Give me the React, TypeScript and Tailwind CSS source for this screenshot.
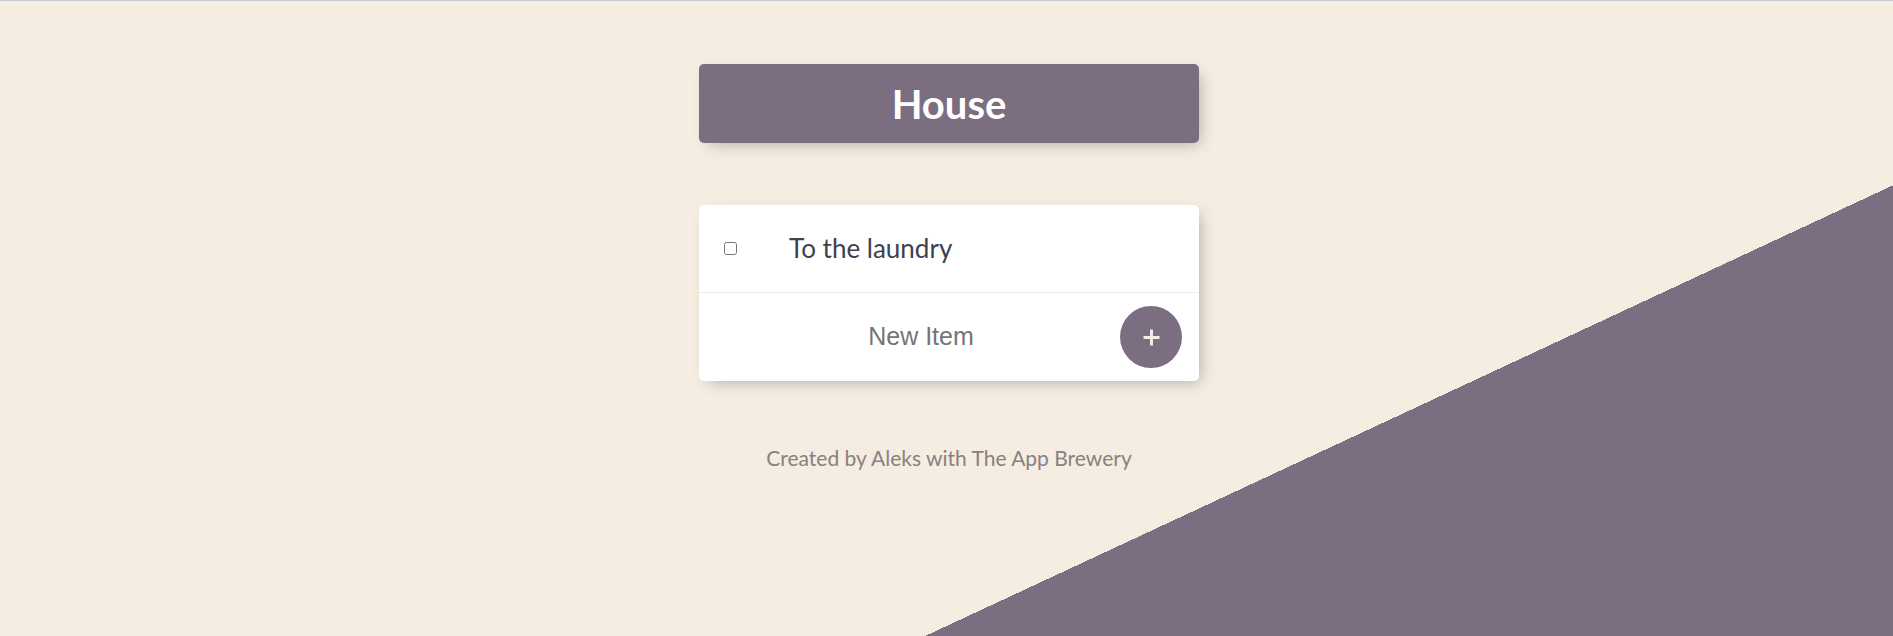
import React, { useState } from 'react';

interface Item {
  id: number;
  title: string;
  done: boolean;
}

export default function App() {
  const [items, setItems] = useState<Item[]>([{ id: 1, title: 'To the laundry', done: false }]);
  const [draft, setDraft] = useState('');

  const addItem = () => {
    if (!draft.trim()) return;
    setItems([...items, { id: Date.now(), title: draft.trim(), done: false }]);
    setDraft('');
  };

  return (
    <div className="min-h-screen w-full bg-[linear-gradient(155.03deg,#f5ece2_70.3%,#7b6e80_70.3%)] font-['Lato','Noto_Sans',sans-serif]">
      <div className="h-px w-full bg-[#c5c8cc]" />
      <div className="flex flex-col items-center pl-[5px]">
        {/* Heading */}
        <div className="mt-[63px] flex h-[79px] w-[500px] items-center justify-center rounded-[5px] bg-[#7b6e80] shadow-[5px_5px_15px_-5px_rgba(0,0,0,0.3)]">
          <h1 className="text-[40px] font-bold leading-none text-[#fffefe]">House</h1>
        </div>

        {/* List */}
        <div className="mt-[62px] w-[500px] rounded-[5px] bg-white shadow-[5px_5px_15px_-5px_rgba(0,0,0,0.3)]">
          {items.map((item) => (
            <div key={item.id} className="flex h-[88px] items-center border-b border-[#f3ede7]">
              <input
                type="checkbox"
                checked={item.done}
                onChange={() => setItems(items.map((i) => (i.id === item.id ? { ...i, done: !i.done } : i)))}
                className="ml-[25px] h-[13px] w-[13px]"
              />
              <p className={`ml-[52px] text-[26px] text-[#3d4150] ${item.done ? 'line-through text-gray-400' : ''}`}>{item.title}</p>
            </div>
          ))}

          <div className="flex h-[88px] items-center pr-[17px]">
            <input
              type="text"
              value={draft}
              onChange={(e) => setDraft(e.target.value)}
              placeholder="New Item"
              className="min-w-0 flex-1 bg-transparent pl-[23px] text-center font-['Liberation_Sans',Arial,sans-serif] text-[25px] text-[#333] outline-none placeholder:text-[#757575]"
            />
            <button
              onClick={addItem}
              className="flex h-[62px] w-[62px] items-center justify-center rounded-full bg-[#7b6e80]"
            >
              <svg width="19" height="19" viewBox="0 0 19 19">
                <path d="M9.5 1.5v16M1.5 9.5h16" stroke="#f5ece2" strokeWidth="3" />
              </svg>
            </button>
          </div>
        </div>

        {/* Footer */}
        <footer className="mt-[61px] text-[21px] text-[#8a8080]">Created by Aleks with The App Brewery</footer>
      </div>
    </div>
  );
}
